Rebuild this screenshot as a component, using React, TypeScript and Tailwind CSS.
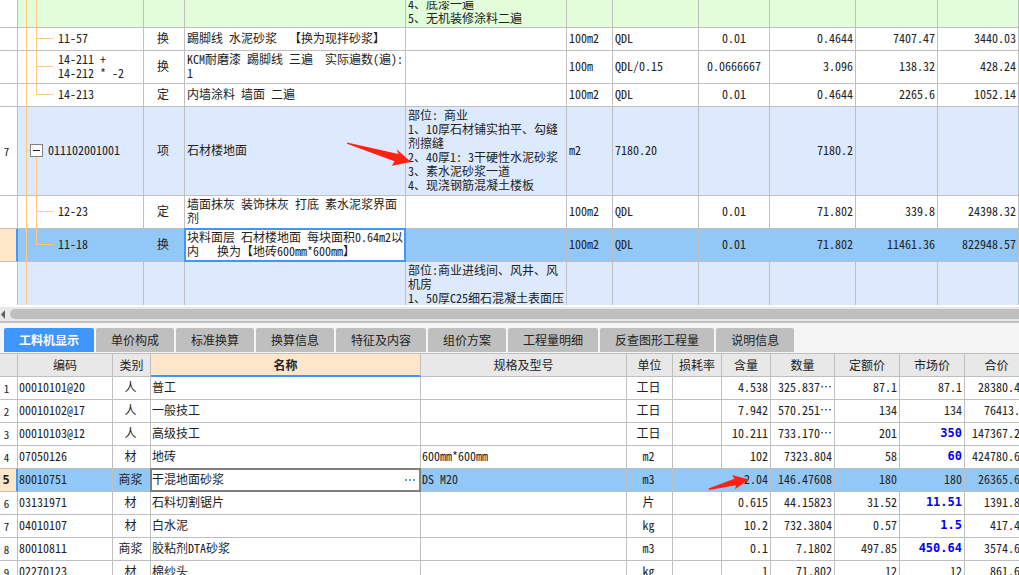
import type { ReactNode } from "react";

const CJK = "font-['Noto_Sans_Mono_CJK_SC','Noto_Sans_CJK_SC',monospace]";

type Tone = "green" | "blue" | "white" | "selected";

interface BudgetRow {
  index?: string;
  tree: "through" | "child" | "last" | "parent" | "root";
  code?: string;
  kind?: string;
  name?: string;
  feature?: string;
  unit?: string;
  expr?: string;
  ratio?: string;
  quantity?: string;
  price?: string;
  total?: string;
  tone: Tone;
  height: string;
}

const budgetRows: BudgetRow[] = [
  { tree: "through", feature: "4、底漆一遍\n5、无机装修涂料二遍", tone: "green", height: "h-7" },
  { tree: "child", code: "11-57", kind: "换", name: "踢脚线 水泥砂浆  【换为现拌砂浆】", unit: "100m2", expr: "QDL", ratio: "0.01", quantity: "0.4644", price: "7407.47", total: "3440.03", tone: "white", height: "h-[23px]" },
  { tree: "child", code: "14-211 +\n14-212 * -2", kind: "换", name: "KCM耐磨漆 踢脚线 三遍  实际遍数(遍):\n1", unit: "100m", expr: "QDL/0.15", ratio: "0.0666667", quantity: "3.096", price: "138.32", total: "428.24", tone: "white", height: "h-[33px]" },
  { tree: "last", code: "14-213", kind: "定", name: "内墙涂料 墙面 二遍", unit: "100m2", expr: "QDL", ratio: "0.01", quantity: "0.4644", price: "2265.6", total: "1052.14", tone: "white", height: "h-[23px]" },
  { index: "7", tree: "parent", code: "011102001001", kind: "项", name: "石材楼地面", feature: "部位: 商业\n1、10厚石材铺实拍平、勾缝\n剂擦缝\n2、40厚1: 3干硬性水泥砂浆\n3、素水泥砂浆一道\n4、现浇钢筋混凝土楼板", unit: "m2", expr: "7180.20", quantity: "7180.2", tone: "blue", height: "h-[89px]" },
  { tree: "child", code: "12-23", kind: "定", name: "墙面抹灰 装饰抹灰 打底 素水泥浆界面\n剂", unit: "100m2", expr: "QDL", ratio: "0.01", quantity: "71.802", price: "339.8", total: "24398.32", tone: "white", height: "h-[33px]" },
  { tree: "last", code: "11-18", kind: "换", name: "块料面层 石材楼地面 每块面积0.64m2以\n内   换为【地砖600mm*600mm】", unit: "100m2", expr: "QDL", ratio: "0.01", quantity: "71.802", price: "11461.36", total: "822948.57", tone: "selected", height: "h-[33px]" },
  { tree: "root", feature: "部位:商业进线间、风井、风\n机房\n1、50厚C25细石混凝土表面压", tone: "blue", height: "h-[47px]" },
];

const toneClass: Record<Tone, string> = {
  green: "bg-[#e1fdd9]",
  blue: "bg-[#dde9fd]",
  white: "bg-white",
  selected: "bg-[#92c8f7]",
};

function TreeGuides({ kind }: { kind: BudgetRow["tree"] }) {
  const line = "absolute bg-[#ffc87d]";
  return (
    <>
      <span className={`${line} left-2 top-0 -bottom-px w-px`} />
      {(kind === "through" || kind === "child") && <span className={`${line} left-[18px] top-0 -bottom-px w-px`} />}
      {kind === "last" && <span className={`${line} left-[18px] top-0 bottom-1/2 w-px`} />}
      {(kind === "child" || kind === "last") && <span className={`${line} left-[18px] top-[calc(50%-1px)] h-px w-[17px]`} />}
      {kind === "parent" && (
        <>
          <span className={`${line} left-2 top-[calc(50%-1px)] h-px w-1`} />
          <span className={`${line} left-[18px] top-1/2 -bottom-px w-px`} />
          <button
            type="button"
            aria-label="折叠"
            className="absolute left-3 top-[calc(50%-7px)] flex size-[13px] items-center justify-center border border-[#808080] bg-white"
          >
            <span className="h-px w-[7px] bg-[#222]" />
          </button>
        </>
      )}
    </>
  );
}

function Cell({ className = "", children }: { className?: string; children?: ReactNode }) {
  return <td className={`border-r border-b border-[#bfbfbf] pr-0.5 pb-0.5 ${className}`}>{children}</td>;
}

function BudgetTable() {
  return (
    <table className="w-full table-fixed border-separate border-spacing-0 whitespace-pre">
      <colgroup>
        <col className="w-[18px]" />
        <col className="w-[126px]" />
        <col className="w-[41px]" />
        <col className="w-[221px]" />
        <col />
        <col className="w-[46px]" />
        <col className="w-[86px]" />
        <col className="w-[71px]" />
        <col className="w-[86px]" />
        <col className="w-[82px]" />
        <col className="w-[81px]" />
      </colgroup>
      <tbody>
        {budgetRows.map((r, i) => {
          const selected = r.tone === "selected";
          return (
            <tr key={i} className={`${toneClass[r.tone]} ${r.height}`}>
              <td className={`border-b border-b-[#bfbfbf] pr-1 text-center text-[11px] ${selected ? "border-r-2 border-r-[#4096ff] bg-[#ffe6c8]" : "border-r border-r-[#bfbfbf] bg-white"}`}>
                {r.index}
              </td>
              <Cell className={`relative ${r.tree === "parent" ? "pl-[30px]" : "pl-10"}`}>
                <TreeGuides kind={r.tree} />
                {r.code}
              </Cell>
              <Cell className="text-center">{r.kind}</Cell>
              <Cell className="relative pl-0.5">
                {selected && <span className="absolute -inset-px border-2 border-[#4096ff] bg-white" />}
                <span className="relative">{r.name}</span>
              </Cell>
              <Cell className="pl-0.5">
                {r.tree === "through" ? (
                  <div className="flex h-6 flex-col justify-end overflow-hidden">
                    <div className="shrink-0">{r.feature}</div>
                  </div>
                ) : (
                  r.feature
                )}
              </Cell>
              <Cell className="pl-0.5">{r.unit}</Cell>
              <Cell className="pl-0.5">{r.expr}</Cell>
              <Cell className="pl-0.5 text-center">{r.ratio}</Cell>
              <Cell className="text-right">{r.quantity}</Cell>
              <Cell className="text-right">{r.price}</Cell>
              <Cell className="text-right">{r.total}</Cell>
            </tr>
          );
        })}
      </tbody>
    </table>
  );
}

const tabs = ["工料机显示", "单价构成", "标准换算", "换算信息", "特征及内容", "组价方案", "工程量明细", "反查图形工程量", "说明信息"];

const headers = ["", "编码", "类别", "名称", "规格及型号", "单位", "损耗率", "含量", "数量", "定额价", "市场价", "合价"];

interface Resource {
  code: string;
  kind: string;
  name: string;
  spec?: string;
  unit: string;
  content: string;
  amount: string;
  base: string;
  market: string;
  adjusted?: boolean;
  total: string;
}

const resources: Resource[] = [
  { code: "00010101@20", kind: "人", name: "普工", unit: "工日", content: "4.538", amount: "325.837…", base: "87.1", market: "87.1", total: "28380.43" },
  { code: "00010102@17", kind: "人", name: "一般技工", unit: "工日", content: "7.942", amount: "570.251…", base: "134", market: "134", total: "76413.7" },
  { code: "00010103@12", kind: "人", name: "高级技工", unit: "工日", content: "10.211", amount: "733.170…", base: "201", market: "350", adjusted: true, total: "147367.27" },
  { code: "07050126", kind: "材", name: "地砖", spec: "600mm*600mm", unit: "m2", content: "102", amount: "7323.804", base: "58", market: "60", adjusted: true, total: "424780.63" },
  { code: "80010751", kind: "商浆", name: "干混地面砂浆", spec: "DS M20", unit: "m3", content: "2.04", amount: "146.47608", base: "180", market: "180", total: "26365.69" },
  { code: "03131971", kind: "材", name: "石料切割锯片", unit: "片", content: "0.615", amount: "44.15823", base: "31.52", market: "11.51", adjusted: true, total: "1391.87" },
  { code: "04010107", kind: "材", name: "白水泥", unit: "kg", content: "10.2", amount: "732.3804", base: "0.57", market: "1.5", adjusted: true, total: "417.46" },
  { code: "80010811", kind: "商浆", name: "胶粘剂DTA砂浆", unit: "m3", content: "0.1", amount: "7.1802", base: "497.85", market: "450.64", adjusted: true, total: "3574.66" },
  { code: "02270123", kind: "材", name: "棉纱头", unit: "kg", content: "1", amount: "71.802", base: "12", market: "12", total: "861.62" },
];

function ResourceTable() {
  return (
    <table className="w-[calc(100%+10px)] table-fixed border-separate border-spacing-0 whitespace-pre">
      <colgroup>
        <col className="w-[18px]" />
        <col className="w-[95px]" />
        <col className="w-[38px]" />
        <col className="w-[270px]" />
        <col />
        <col className="w-[46px]" />
        <col className="w-[49px]" />
        <col className="w-[49px]" />
        <col className="w-16" />
        <col className="w-[65px]" />
        <col className="w-[65px]" />
        <col className="w-16" />
      </colgroup>
      <thead>
        <tr className="h-[23px]">
          {headers.map((h, i) => (
            <th
              key={i}
              className={
                h === "名称"
                  ? "border-r border-b-2 border-r-[#bfbfbf] border-b-[#4096ff] bg-[#ffe6c8] font-bold"
                  : "border-r border-b border-[#bfbfbf] bg-[#e8e8e8] font-normal"
              }
            >
              {h}
            </th>
          ))}
        </tr>
      </thead>
      <tbody>
        {resources.map((r, i) => {
          const selected = i === 4;
          return (
            <tr key={r.code} className={`h-[23px] ${selected ? "bg-[#92c8f7]" : "bg-white"}`}>
              <td className={`border-b border-b-[#bfbfbf] pr-1 text-center ${selected ? "border-r-2 border-r-[#4096ff] bg-[#ffe6c8] font-['DejaVu_Sans_Mono',monospace] font-bold" : "border-r border-r-[#bfbfbf] text-[11px]"}`}>
                {i + 1}
              </td>
              <Cell className="pl-px">{r.code}</Cell>
              <Cell className="text-center">{r.kind}</Cell>
              <Cell className="relative pl-px">
                {selected && (
                  <span className="absolute -inset-px flex items-center justify-end border-2 border-[#808080] bg-white pr-1">
                    <button type="button" aria-label="选择" className="flex gap-0.5">
                      <span className="size-0.5 bg-[#5a9fd8]" />
                      <span className="size-0.5 bg-[#5a9fd8]" />
                      <span className="size-0.5 bg-[#5a9fd8]" />
                    </button>
                  </span>
                )}
                <span className="relative">{r.name}</span>
              </Cell>
              <Cell className="pl-px">{r.spec}</Cell>
              <Cell className="text-center">{r.unit}</Cell>
              <Cell />
              <Cell className="text-right">{r.content}</Cell>
              <Cell className="text-right">{r.amount}</Cell>
              <Cell className="text-right">{r.base}</Cell>
              <Cell className={r.adjusted ? "text-right font-['DejaVu_Sans_Mono',monospace] font-bold text-[#0000f0]" : "text-right"}>{r.market}</Cell>
              <Cell className="text-right">{r.total}</Cell>
            </tr>
          );
        })}
      </tbody>
    </table>
  );
}

export default function App() {
  return (
    <div className={`relative flex h-screen flex-col overflow-hidden bg-white text-xs leading-[14px] text-[#222] ${CJK}`}>
      <section className="h-[305px] shrink-0 overflow-hidden">
        <BudgetTable />
      </section>

      <div className="mt-0.5 flex h-3.5 shrink-0 items-center gap-1 overflow-hidden bg-[#e8e8e8]">
        <button type="button" aria-label="向左滚动" className="pl-px">
          <svg width="5" height="9" viewBox="0 0 5 9">
            <path d="M4 0V9L0 4.5Z" fill="#606060" />
          </svg>
        </button>
        <div className="-mr-2 h-2.5 flex-1 rounded-full bg-[#bfbfbf]" />
      </div>

      <nav role="tablist" className="flex h-[33px] shrink-0 gap-0.5 border-t-2 border-b border-[#bfbfbf] bg-[#f5f5f5] px-1 pt-[5px]">
        {tabs.map((t, i) => (
          <button
            key={t}
            type="button"
            role="tab"
            aria-selected={i === 0}
            className={`h-6 rounded-t-xs px-[15px] whitespace-nowrap ${i === 0 ? "bg-[#4096ff] font-bold text-white" : "bg-[#bfbfbf]"}`}
          >
            {t}
          </button>
        ))}
      </nav>

      <section className="min-h-0 flex-1 overflow-hidden">
        <ResourceTable />
      </section>

      <svg className="pointer-events-none absolute top-[142px] left-[346px]" width="66" height="26" viewBox="346 142 66 26">
        <path d="M347 142.5L398.5 154L396.7 149.3L411 162L391.8 165.7L394.5 161.2L347 143.8Z" fill="#ff2214" />
      </svg>
      <svg className="pointer-events-none absolute top-[473px] left-[708px]" width="42" height="19" viewBox="708 473 42 19">
        <path d="M708.5 488.6L734.3 478.7L732 475L749 479.5L735 489.3L736 485.3L709 490Z" fill="#ff2214" />
      </svg>
    </div>
  );
}
